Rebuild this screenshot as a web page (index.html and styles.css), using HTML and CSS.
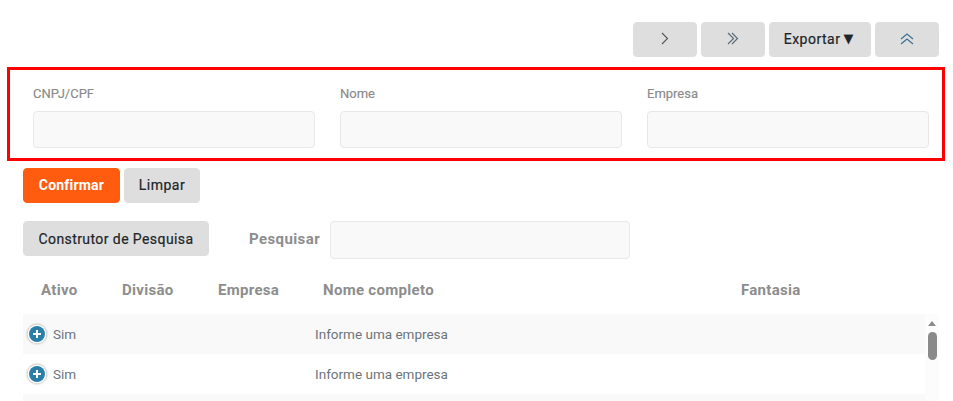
FILE: index.html
```html
<!DOCTYPE html>
<html lang="pt">
<head>
<meta charset="utf-8">
<title>Pesquisa</title>
<link rel="stylesheet" href="styles.css">
</head>
<body>
<div class="toolbar">
  <button class="btn nav"><svg width="8" height="13" viewBox="0 0 8 13"><path d="M1 1l5.500 5.500L1 12" fill="none" stroke="#555" stroke-width="1.100"/></svg></button>
  <button class="btn nav"><svg width="12" height="13" viewBox="0 0 12 13"><path d="M1 1l5.500 5.500L1 12M5 1l5.500 5.500L5 12" fill="none" stroke="#5d6a78" stroke-width="1.200"/></svg></button>
  <button class="btn export">Exportar<span class="caret">▼</span></button>
  <button class="btn nav"><svg width="14" height="12" viewBox="0 0 14 12"><path d="M1 6l6-5 6 5M1 11l6-5 6 5" fill="none" stroke="#3f6f92" stroke-width="1.200"/></svg></button>
</div>
<form class="filters">
  <div class="field"><label>CNPJ/CPF</label><input class="input" type="text"></div>
  <div class="field"><label>Nome</label><input class="input" type="text"></div>
  <div class="field"><label>Empresa</label><input class="input" type="text"></div>
</form>
<div class="actions">
  <button class="btn primary">Confirmar</button>
  <button class="btn limpar">Limpar</button>
</div>
<div class="search">
  <button class="btn builder">Construtor de Pesquisa</button>
  <span class="search-label">Pesquisar</span>
  <input class="input search-input" type="text">
</div>
<div class="table-head">
  <span class="col-ativo">Ativo</span>
  <span class="col-divisao">Divisão</span>
  <span class="col-empresa">Empresa</span>
  <span class="col-nome">Nome completo</span>
  <span class="col-fantasia">Fantasia</span>
</div>
<div class="table-body">
  <div class="rows">
    <div class="row odd"><span class="plus"></span><span class="sim">Sim</span><span class="nome">Informe uma empresa</span></div>
    <div class="row"><span class="plus"></span><span class="sim">Sim</span><span class="nome">Informe uma empresa</span></div>
    <div class="row odd"></div>
  </div>
  <div class="scrollbar"><span class="arrow"></span><span class="thumb"></span></div>
</div>
</body>
</html>
```
FILE: styles.css
```css
* { box-sizing: border-box; }
html, body { height: 401px; overflow: hidden; }
body { margin: 0; background: #fff; font-family: Roboto, "Liberation Sans", sans-serif; color: #212529; }

.btn { border: 1px solid #dedede; background: #dedede; border-radius: 4px; font: 400 14px/1 Roboto, sans-serif; letter-spacing: .5px; color: #212529; height: 35px; padding: 0 0 2px; display: flex; align-items: center; justify-content: center; -webkit-text-stroke: .2px #212529; }

.toolbar { display: flex; gap: 4px; justify-content: flex-end; padding: 22px 14px 0 0; height: 67px; align-items: flex-start; }
.nav { width: 64px; }
.export { width: 102px; }
.caret { font-size: 16px; letter-spacing: 0; }

.filters { margin-left: 7px; width: 938px; height: 94px; border: 3px solid #f00; display: flex; gap: 25px; padding: 16px 13px 0 23px; }
.field { width: 282px; display: flex; flex-direction: column; }
.field label { font-size: 13px; font-weight: 400; line-height: 15px; color: #8a8a8a; height: 25px; -webkit-text-stroke: .15px #8a8a8a; }
.input { display: block; height: 37px; width: 100%; border: 1px solid #e8e8e8; border-radius: 4px; background: #f9f9f9; }

.actions { display: flex; gap: 4px; padding: 7px 0 0 23px; height: 60px; }
.primary { width: 97px; background: #ff5c10; border-color: #ff5c10; color: #fff; font-weight: 700; letter-spacing: .2px; -webkit-text-stroke: 0; }
.limpar { width: 76px; }

.search { display: flex; align-items: flex-start; padding-left: 23px; height: 59px; }
.builder { width: 186px; padding-bottom: 0; letter-spacing: .42px; }
.search-label { margin-left: 40px; width: 81px; font-size: 15px; font-weight: 700; color: #8d8d8d; line-height: 36px; letter-spacing: .4px; }
.search-input { width: 300px; height: 38px; }

.table-head { height: 34px; margin-left: 23px; font-size: 15px; font-weight: 700; color: #8d8d8d; line-height: 20px; letter-spacing: .3px; display: flex; }
.col-ativo { margin-left: 18px; width: 81px; }
.col-divisao { width: 96px; }
.col-empresa { width: 105px; }
.col-nome { width: 418px; }

.table-body { display: flex; margin-left: 23px; width: 916px; height: 87px; overflow: hidden; }
.rows { flex: 1; }
.row { height: 40px; display: flex; align-items: center; font-size: 13.500px; color: #6c757d; }
.odd { background: #f9f9f9; }
.plus { position: relative; width: 16px; height: 16px; margin-left: 6px; border-radius: 50%; background: #2a7ea8; box-shadow: 0 0 0 1.500px #fff, 0 0 2px 2px #aaa; }
.plus::before, .plus::after { content: ""; position: absolute; background: #fff; }
.plus::before { left: 4px; top: 7.250px; width: 8px; height: 1.500px; }
.plus::after { left: 7.250px; top: 4px; width: 1.500px; height: 8px; }
.sim { margin-left: 8px; width: 262px; }

.scrollbar { width: 14px; display: flex; flex-direction: column; align-items: center; background: #fcfcfc; height: 87px; }
.arrow { margin-top: 7px; width: 0; height: 0; border-left: 4px solid transparent; border-right: 4px solid transparent; border-bottom: 5px solid #8a8a8a; }
.thumb { margin-top: 6px; width: 9px; height: 28px; border-radius: 5px; background: #8a8a8a; }
```
